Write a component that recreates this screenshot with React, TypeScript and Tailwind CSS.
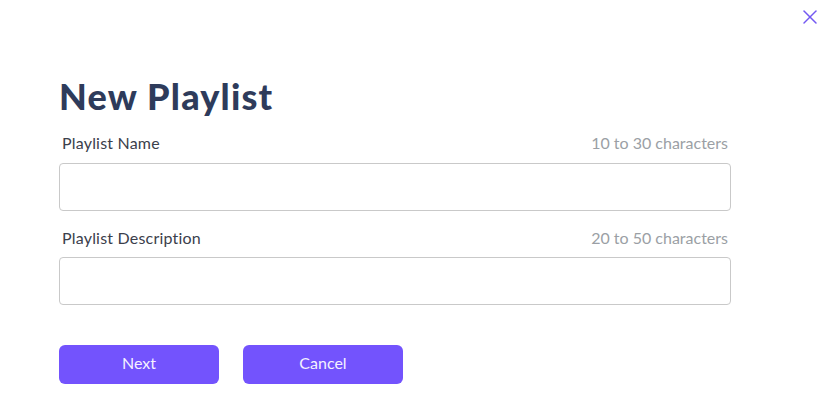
import { X } from "lucide-react";

export default function App() {
  return (
    <div className="relative w-[828px] h-[393px] bg-white font-['Lato','Noto_Sans',sans-serif]">
      <button className="absolute right-[6px] top-[5px] text-[#7358f2]">
        <X size={24} strokeWidth={1.5} />
      </button>
      <div className="pl-[59px] pr-[97px] pt-[74px]">
        <h1 className="text-[36px] leading-[44px] font-black tracking-[1.2px] text-[#2e3b5b]">
          New Playlist
        </h1>
        <div className="mt-[15px] flex items-center justify-between px-[3px] text-[16px] leading-[20px]">
          <span className="text-[#3b404b] tracking-[0.2px]">Playlist Name</span>
          <span className="text-[#9b9fa5]">10 to 30 characters</span>
        </div>
        <input className="mt-[10px] block w-full h-[48px] rounded-[4px] border border-[#c9c9c9] outline-none" />
        <div className="mt-[17px] flex items-center justify-between px-[3px] text-[16px] leading-[20px]">
          <span className="text-[#3b404b] tracking-[0.2px]">Playlist Description</span>
          <span className="text-[#9b9fa5]">20 to 50 characters</span>
        </div>
        <input className="mt-[9px] block w-full h-[48px] rounded-[4px] border border-[#c9c9c9] outline-none" />
        <div className="mt-[40px] flex gap-[24px]">
          <button className="w-[160px] h-[39px] pb-[3px] rounded-[6px] bg-[#7353fd] text-[#f4f1ff] text-[16px]">Next</button>
          <button className="w-[160px] h-[39px] pb-[3px] rounded-[6px] bg-[#7353fd] text-[#f4f1ff] text-[16px]">Cancel</button>
        </div>
      </div>
    </div>
  );
}
